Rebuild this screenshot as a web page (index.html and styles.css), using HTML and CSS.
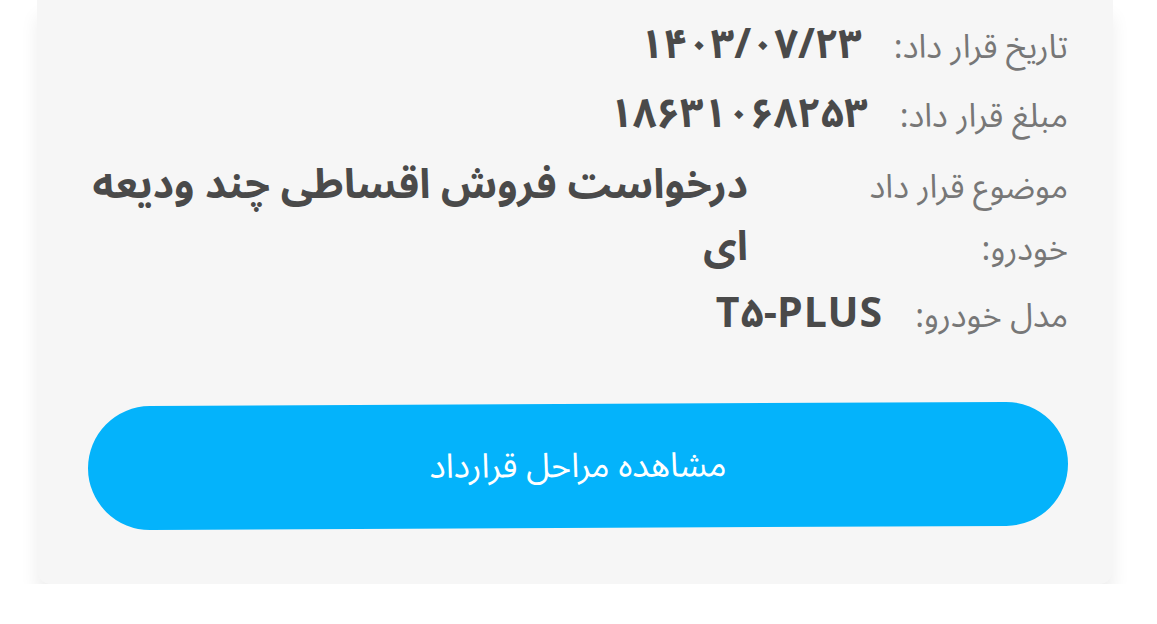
FILE: index.html
```html
<!DOCTYPE html>
<html lang="fa" dir="rtl">
<head>
<meta charset="utf-8">
<title>جزئیات قرارداد</title>
<link rel="stylesheet" href="styles.css">
</head>
<body>
<div class="card">
  <div class="row">
    <span class="label">تاریخ قرار داد:</span>
    <span class="value num">۱۴۰۳/۰۷/۲۳</span>
  </div>
  <div class="row">
    <span class="label">مبلغ قرار داد:</span>
    <span class="value num">۱۸۶۳۱۰۶۸۲۵۳</span>
  </div>
  <div class="row row-wrap">
    <span class="label label-wide">موضوع قرار داد خودرو:</span>
    <span class="value value-wide">درخواست فروش اقساطی چند ودیعه ای</span>
  </div>
  <div class="row">
    <span class="label">مدل خودرو:</span>
    <span class="value latin">T۵-PLUS</span>
  </div>
  <button class="action" type="button">مشاهده مراحل قرارداد</button>
</div>
</body>
</html>
```
FILE: styles.css
```css
html, body {
  margin: 0;
  padding: 0;
  background: #ffffff;
  overflow: hidden;
}

body {
  font-family: "Noto Sans Arabic", "DejaVu Sans", sans-serif;
  direction: rtl;
}

.card {
  margin: 0 44px 0 37px;
  padding: 12px 45px 56px 51px;
  background: #f6f6f6;
  border-radius: 0 0 14px 14px;
  box-shadow: 0 16px 18px rgba(0, 0, 0, 0.07);
  display: flex;
  flex-direction: column;
}

.row {
  display: flex;
  align-items: baseline;
  gap: 32px;
  line-height: 67px;
}

.row-wrap {
  line-height: 62px;
  gap: 0;
  margin-top: 4px;
}

.label {
  color: #777777;
  font-size: 33px;
  white-space: nowrap;
}

.label-wide {
  width: 320px;
  padding-left: 110px;
  box-sizing: border-box;
  white-space: normal;
  flex: none;
}

.value {
  color: #4a4a4a;
  font-size: 41px;
  font-weight: bold;
}

.num {
  letter-spacing: 3px;
}

.latin {
  letter-spacing: 1px;
}

.value-wide {
  flex: 1;
}

.action {
  margin-top: 54px;
  height: 124px;
  border: none;
  border-radius: 62px;
  background: #04b3fb;
  color: #ffffff;
  font-family: inherit;
  font-size: 34px;
  transform: rotate(-0.28deg);
}
```
